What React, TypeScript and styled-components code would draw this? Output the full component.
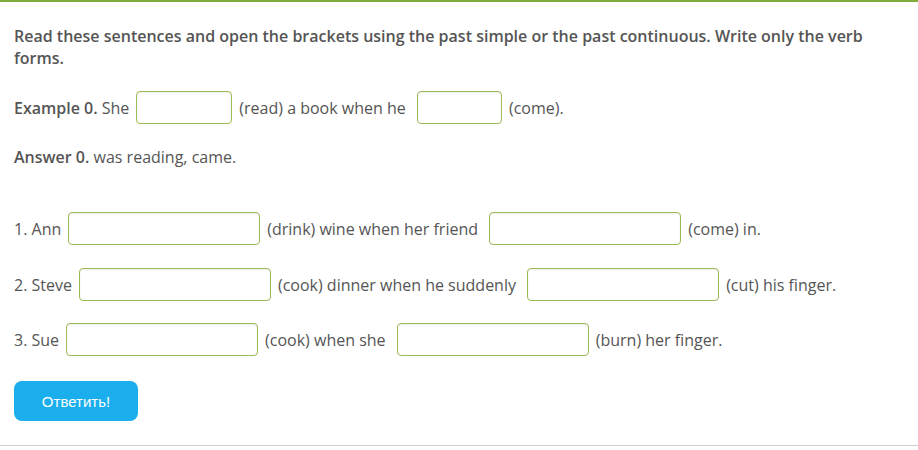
import React from "react";
import styled, { createGlobalStyle } from "styled-components";

const GlobalStyle = createGlobalStyle`
  body {
    margin: 0;
    background: #fff;
    font-family: "Open Sans", "Liberation Sans", sans-serif;
    color: #555;
  }
`;

interface Gap {
  gap: number;
}

interface FieldProps {
  w: number;
}

const Page = styled.div`
  border-top: 2px solid #7fac3a;
  border-bottom: 1px solid #cfcfcf;
  padding: 23px 14px 24px;
  display: flex;
  flex-direction: column;
  align-items: flex-start;
`;

const Task = styled.p`
  margin: 0;
  font-size: 16px;
  font-weight: 600;
  line-height: 22px;
`;

const Line = styled.div<Gap>`
  display: flex;
  align-items: center;
  min-height: 33px;
  margin-top: ${(p) => p.gap}px;
  font-size: 16px;
  white-space: pre;
`;

const TextLine = styled.div<Gap>`
  font-size: 16px;
  line-height: 22px;
  margin-top: ${(p) => p.gap}px;
`;

const Label = styled.b`
  font-weight: 600;
`;

const Field = styled.input<FieldProps>`
  width: ${(p) => p.w}px;
  height: 33px;
  box-sizing: border-box;
  margin: 0 7px;
  border: 1px solid #9cbb55;
  border-radius: 4px;
  box-shadow: inset 0 1px 2px rgba(0, 0, 0, 0.08);
  outline: none;
  font: inherit;
  padding: 0 8px;
`;

const SubmitButton = styled.button`
  margin-top: 25px;
  width: 124px;
  height: 40px;
  border: none;
  border-radius: 8px;
  background: #1aafec;
  color: #fff;
  font-family: "Liberation Sans", Arial, sans-serif;
  font-size: 15px;
  cursor: pointer;
`;

type Part = string | number;

const rows: { gap: number; parts: Part[] }[] = [
  { gap: 44, parts: ["1. Ann", 192, "(drink) wine when her friend ", 192, "(come) in."] },
  { gap: 23, parts: ["2. Steve", 192, "(cook) dinner when he suddenly ", 192, "(cut) his finger."] },
  { gap: 22, parts: ["3. Sue", 192, "(cook) when she ", 192, "(burn) her finger."] },
];

const renderParts = (parts: Part[]) =>
  parts.map((p, i) =>
    typeof p === "number" ? <Field key={i} w={p} /> : <span key={i}>{p}</span>
  );

export default function App() {
  return (
    <>
      <GlobalStyle />
      <Page>
        <Task>
          Read these sentences and open the brackets using the past simple or
          the past continuous. Write only the verb forms.
        </Task>
        <Line gap={22}>
          <Label>Example 0.</Label>
          <span> She</span>
          <Field w={96} />
          <span>(read) a book when he </span>
          <Field w={85} />
          <span>(come).</span>
        </Line>
        <TextLine gap={22}>
          <Label>Answer 0.</Label> was reading, came.
        </TextLine>
        {rows.map((r, i) => (
          <Line key={i} gap={r.gap}>
            {renderParts(r.parts)}
          </Line>
        ))}
        <SubmitButton>Ответить!</SubmitButton>
      </Page>
    </>
  );
}
